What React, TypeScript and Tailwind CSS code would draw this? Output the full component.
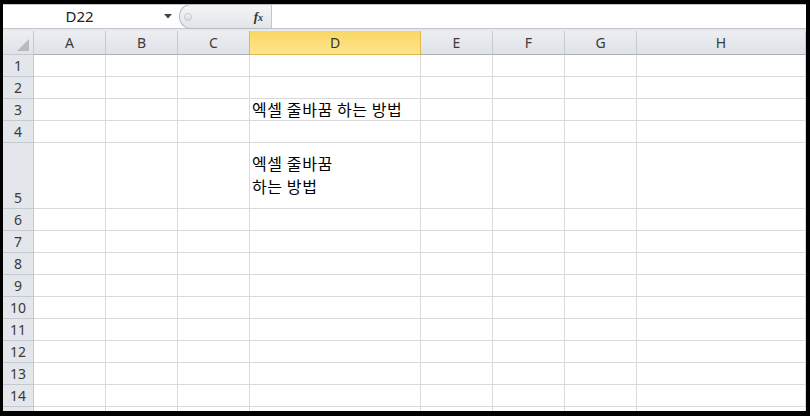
const COLS = [
  { k: 'A', cls: 'border-r-[#c5cad1]' },
  { k: 'B', cls: 'border-r-[#c5cad1]' },
  { k: 'C', cls: 'border-r-[#e1b64c]' },
  { k: 'D', cls: 'border-r-[#e1b64c]' },
  { k: 'E', cls: 'border-r-[#c5cad1]' },
  { k: 'F', cls: 'border-r-[#c5cad1]' },
  { k: 'G', cls: 'border-r-[#c5cad1]' },
  { k: 'H', cls: 'border-r-[#c5cad1]' },
];

const ROWS = [1, 2, 3, 4, 5, 6, 7, 8, 9, 10, 11, 12, 13, 14, 15];

const grid = 'grid shrink-0 grid-cols-[31px_72px_72px_72px_171px_72px_72px_72px_1fr]';
const uiFont = "font-['Noto_Sans','Open_Sans',sans-serif]";
const krFont = "font-['Noto_Sans_CJK_KR','Noto_Sans',sans-serif]";

function FormulaBar() {
  return (
    <div className="flex h-[25px] shrink-0 border-y border-[#c2c6cc] bg-white">
      <div className="flex w-[173px] items-center">
        <span className={`flex-1 pr-[8px] text-center text-[15px] text-[#222] ${uiFont}`}>D22</span>
        <svg width="8" height="5" viewBox="0 0 8 5" className="mr-[4px]">
          <polygon points="0,0 8,0 4,4.5" fill="#444" />
        </svg>
      </div>
      <div className="ml-[3px] -my-px flex h-[25px] w-[92px] items-center rounded-l-[12px] border border-r-0 border-[#b6bbc2] bg-gradient-to-b from-[#f4f5f7] to-[#e2e5e9]">
        <div className="ml-[4px] h-[8px] w-[8px] rounded-full border border-[#c3c7cd] bg-gradient-to-b from-[#f2f3f5] to-[#d9dce1]" />
        <span className="ml-auto mr-[8px] font-['Liberation_Serif',serif] text-[13px] font-bold italic text-[#333]">
          f<span className="text-[10px]">x</span>
        </span>
      </div>
      <div className="-my-px flex-1 border-y border-l border-[#c2c6cc] bg-white" />
    </div>
  );
}

function HeaderRow() {
  return (
    <div className={`${grid} h-[24px]`}>
      <div className="relative border-r border-b border-[#c5cad1] bg-gradient-to-b from-[#eceef1] to-[#dfe2e7]">
        <svg width="12" height="12" viewBox="0 0 12 12" className="absolute right-[4px] bottom-[3px]">
          <polygon points="12,0 12,12 0,12" fill="#b6bbc2" />
        </svg>
      </div>
      {COLS.map((c) =>
        c.k === 'D' ? (
          <div
            key={c.k}
            className={`flex items-center justify-center border-r border-b border-[#e1b64c] bg-gradient-to-b from-[#f9d765] to-[#ffe58c] text-[14px] text-[#333] ${uiFont}`}
          >
            {c.k}
          </div>
        ) : (
          <div
            key={c.k}
            className={`flex items-center justify-center border-r border-b border-b-[#a9b1bb] bg-gradient-to-b from-[#eceef1] to-[#dfe2e7] text-[14px] text-[#3a3a3a] ${uiFont} ${c.cls}`}
          >
            {c.k}
          </div>
        ),
      )}
    </div>
  );
}

function Row({ n }: { n: number }) {
  const tall = n === 5;
  return (
    <div className={`${grid} ${tall ? 'h-[66px]' : 'h-[22px]'}`}>
      <div className={`flex items-end justify-center border-r border-b border-[#c5cad1] bg-[#e3e6ea] text-[14px] text-[#3a3a3a] ${uiFont}`}>
        <span className="leading-[21px]">{n}</span>
      </div>
      {COLS.map((c) => (
        <div key={c.k} className="border-r border-b border-[#dadada] bg-white">
          {c.k === 'D' && n === 3 && (
            <div className={`whitespace-nowrap pl-[2px] text-[16px] tracking-[0.6px] leading-[21px] text-black ${krFont}`}>
              엑셀 줄바꿈 하는 방법
            </div>
          )}
          {c.k === 'D' && n === 5 && (
            <div className={`pl-[2px] pt-[9px] text-[16px] tracking-[0.6px] leading-[23px] text-black ${krFont}`}>
              엑셀 줄바꿈
              <br />
              하는 방법
            </div>
          )}
        </div>
      ))}
    </div>
  );
}

export default function App() {
  return (
    <div className="h-[416px] w-[810px] bg-black pt-[4px] pr-[4px] pb-[5px] pl-[3px]">
      <div className="flex h-full flex-col overflow-hidden bg-white">
        <FormulaBar />
        <div className="h-[2px] shrink-0 bg-[#e6e9ec]" />
        <HeaderRow />
        {ROWS.map((n) => (
          <Row key={n} n={n} />
        ))}
      </div>
    </div>
  );
}
